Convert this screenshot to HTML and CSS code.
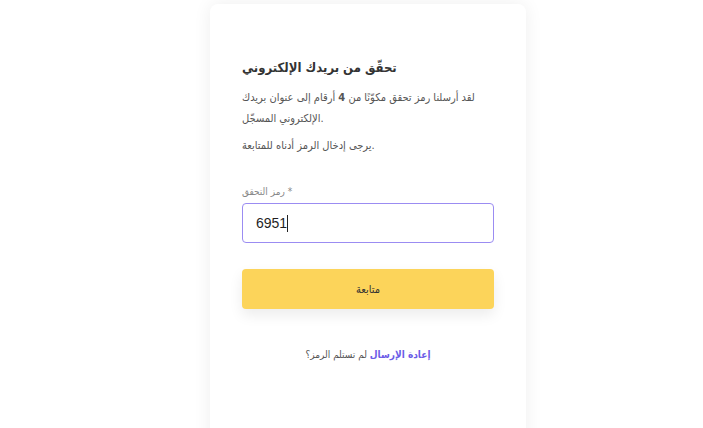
FILE: index.html
```html
<!DOCTYPE html>
<html lang="ar">

<head>
  <meta charset="UTF-8">
  <meta name="viewport" content="width=device-width, initial-scale=1.0">
  <title>تحقق من بريدك الإلكتروني</title>
  <link rel="stylesheet" href="styles.css">
</head>

<body>
  <div class="card">
    <h1 class="title">تحقّق من بريدك الإلكتروني</h1>
    <p class="text">لقد أرسلنا رمز تحقق مكوّنًا من <b>4</b> أرقام إلى عنوان بريدك الإلكتروني المسجّل.</p>
    <p class="text">يرجى إدخال الرمز أدناه للمتابعة.</p>

    <div class="field">
      <label class="label" for="code">رمز التحقق *</label>
      <div class="input">6951<span class="caret"></span></div>
    </div>

    <button class="btn">متابعة</button>

    <p class="resend"><a href="#">إعادة الإرسال</a> لم تستلم الرمز؟</p>
  </div>
</body>

</html>
```

FILE: styles.css
```css
body {
  margin: 0;
  padding-left: 33px;
  height: 428px;
  overflow: hidden;
  background-color: #fff;
  font-family: "DejaVu Sans Condensed", "DejaVu Sans", sans-serif;
}

.card {
  width: 252px;
  margin: 4px auto 0;
  padding: 56px 32px 60px;
  background-color: #fff;
  border-radius: 8px;
  box-shadow: 0 0 18px rgba(0, 0, 0, 0.07);
  min-height: 400px;
}

.title {
  margin: 0 0 12px;
  font-size: 13px;
  font-weight: bold;
  color: #333;
}

.text {
  margin: 0 0 6px;
  font-size: 11px;
  line-height: 21px;
  color: #555;
}

.field {
  margin-top: 30px;
}

.label {
  display: block;
  font-size: 10px;
  color: #888;
  margin-bottom: 6px;
}

.input {
  height: 38px;
  border: 1px solid #9b8cf2;
  border-radius: 4px;
  padding: 0 13px;
  display: flex;
  align-items: center;
  font-family: "Liberation Sans", sans-serif;
  font-size: 14px;
  color: #1f1f1f;
}

.caret {
  width: 1px;
  height: 17px;
  background-color: #222;
}

.btn {
  display: block;
  width: 100%;
  height: 40px;
  margin-top: 26px;
  border: none;
  border-radius: 4px;
  background-color: #fcd45a;
  box-shadow: 0 6px 14px rgba(0, 0, 0, 0.08);
  font-family: inherit;
  font-size: 11px;
  color: #333;
}

.resend {
  margin: 40px 0 0;
  text-align: center;
  font-size: 10px;
  color: #555;
}

.resend a {
  color: #6c5ce7;
  font-weight: bold;
  text-decoration: none;
}
```
